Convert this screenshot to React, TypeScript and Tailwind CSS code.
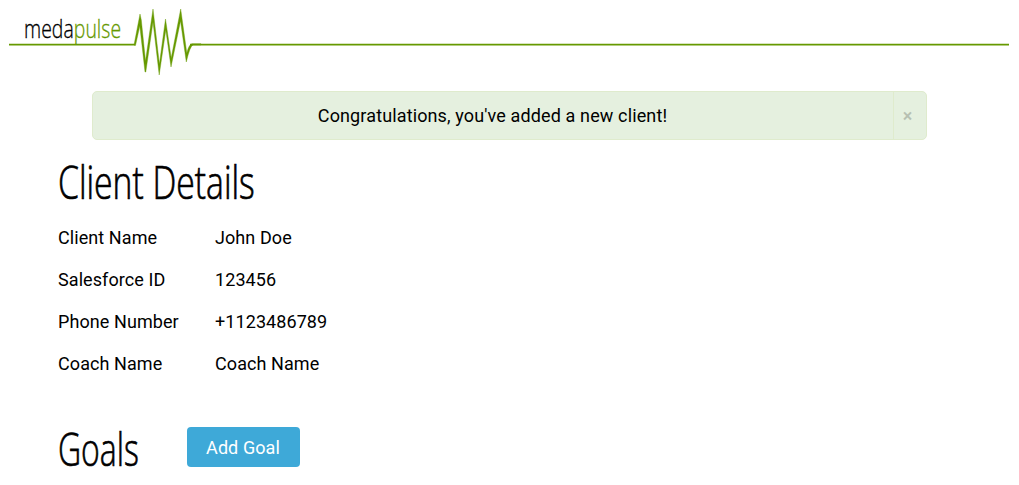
const details = [
  ['Client Name', 'John Doe'],
  ['Salesforce ID', '123456'],
  ['Phone Number', '+1123486789'],
  ['Coach Name', 'Coach Name'],
];

function Header() {
  return (
    <header className="grid h-[82px] px-[9px]">
      <svg className="col-start-1 row-start-1" width="1000" height="82" viewBox="9 0 1000 82" fill="none">
        <path d="M9 44.6H135M190 44.6H1009" stroke="#669900" strokeWidth="1.8" />
        <path
          d="M134 45L140 14L141.3 20L145.5 61L153 9L159.4 64L165.5 19L171.2 58L180.7 9L186.8 53Q189 44.2 192 43.8H201V45H193Q190 46 186.3 62L180.5 21L171 67L165.8 30L159.2 75L153 22L145.8 72H145L139.8 26L135.5 45.5Z"
          fill="#669900"
          stroke="#669900"
          strokeWidth="0.4"
        />
      </svg>
      <div className="col-start-1 row-start-1 mt-[10px] ml-[15px] h-[36px] origin-left scale-x-[0.745] justify-self-start whitespace-nowrap font-['Open_Sans'] text-[26px] leading-[36px] font-light text-black [-webkit-text-stroke:0.35px]">
        meda<span className="text-[#669900]">pulse</span>
      </div>
    </header>
  );
}

export default function App() {
  return (
    <div className="h-[485px] overflow-hidden bg-white font-[Roboto,sans-serif] text-[18px] tracking-[0.08px] text-black">
      <Header />
      <div className="mx-[92px] mt-[9px] flex h-[49px] rounded-[5px] border border-[#dfebcd] bg-[#e5f0df]">
        <p className="flex flex-1 items-center justify-center pr-[1px] tracking-[0.13px]">
          Congratulations, you've added a new client!
        </p>
        <button className="w-[33px] border-l border-[#dfebcd] pr-[5px] text-[18px] font-medium text-[#b7c0b2]">×</button>
      </div>
      <main className="pl-[58px]">
        <div className="mt-[11px] flex">
          <h1 className="h-[60px] origin-left scale-x-[0.732] whitespace-nowrap font-['Open_Sans'] text-[46px] leading-[60px] font-light tracking-normal [-webkit-text-stroke:0.7px]">
            Client Details
          </h1>
        </div>
        <dl className="mt-[5px]">
          {details.map(([label, value]) => (
            <div key={label} className="flex h-[42px] items-center">
              <dt className="w-[157px]">{label}</dt>
              <dd>{value}</dd>
            </div>
          ))}
        </dl>
        <div className="mt-[34px] flex">
          <div className="w-[128.5px]">
            <h1 className="h-[60px] origin-left scale-x-[0.694] whitespace-nowrap font-['Open_Sans'] text-[46px] leading-[60px] font-light tracking-normal [-webkit-text-stroke:0.7px]">
              Goals
            </h1>
          </div>
          <button className="mt-[8.5px] h-[40px] w-[113px] rounded-[4px] bg-[#3ea9d8] pt-[1px] text-white">
            Add Goal
          </button>
        </div>
      </main>
    </div>
  );
}
